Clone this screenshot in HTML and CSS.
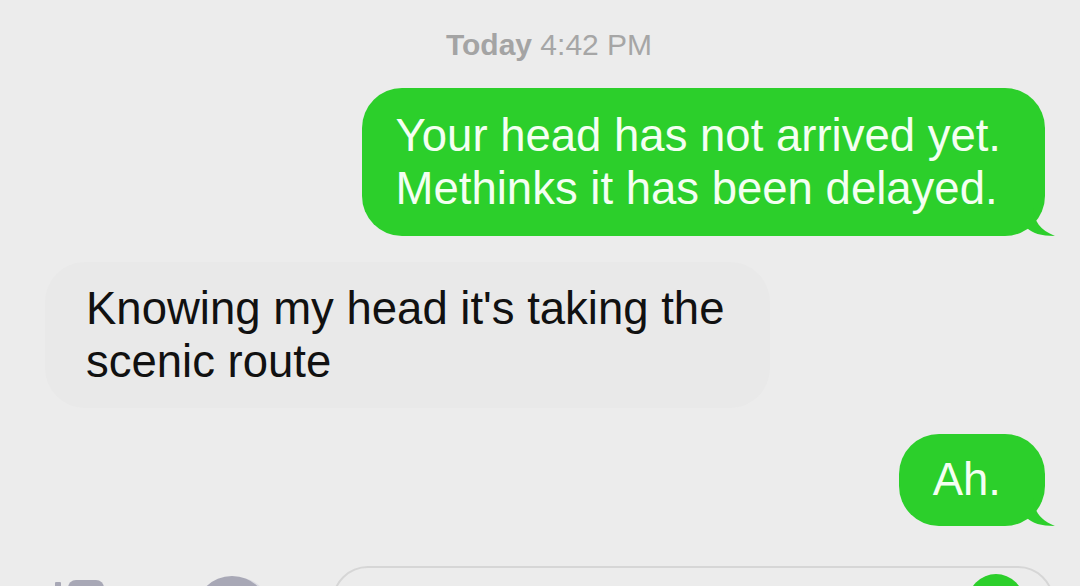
FILE: index.html
```html
<!DOCTYPE html>
<html>
<head>
<meta charset="utf-8">
<link rel="stylesheet" href="styles.css">
</head>
<body>
<div class="screen">
  <div class="timestamp"><span class="day">Today</span> 4:42 PM</div>
  <div class="thread">
    <div class="row row-out">
      <div class="bubble out">Your head has not arrived yet.<br>Methinks it has been delayed.
        <svg class="tail tail-out" width="32" height="28" viewBox="0 0 32 28"><path d="M0 0 L6 0 C7 13 13 22 28 28 C14 28 5 25 0 20 Z" fill="#2ccf2b"/></svg>
      </div>
    </div>
    <div class="row row-in">
      <div class="bubble in">Knowing my head it's taking the<br>scenic route</div>
    </div>
    <div class="row row-out">
      <div class="bubble out short">Ah.
        <svg class="tail tail-out" width="32" height="28" viewBox="0 0 32 28"><path d="M0 0 L6 0 C7 13 13 22 28 28 C14 28 5 25 0 20 Z" fill="#2ccf2b"/></svg>
      </div>
    </div>
  </div>
  <div class="composer">
    <div class="icon camera"></div>
    <div class="icon apps"></div>
    <div class="field"><div class="send"></div></div>
  </div>
</div>
</body>
</html>
```

FILE: styles.css
```css
html, body {
  margin: 0;
  padding: 0;
  background: #ececec;
}
.screen {
  width: 1080px;
  height: 586px;
  overflow: hidden;
  font-family: "Liberation Sans", Arial, sans-serif;
  display: flex;
  flex-direction: column;
}
.timestamp {
  text-align: center;
  color: #a6a6a6;
  font-size: 30px;
  line-height: 30px;
  padding-top: 30px;
  padding-left: 18px;
}
.day { font-weight: bold; color: #a4a4a4; }
.thread {
  display: flex;
  flex-direction: column;
  gap: 26px;
  padding: 28px 35px 0 45px;
}
.row { display: flex; }
.row-out { justify-content: flex-end; }
.row-in { justify-content: flex-start; }
.bubble {
  position: relative;
  font-size: 45.5px;
  line-height: 53px;
  border-radius: 40px;
  padding: 21px 44px 21px 34px;
}
.out {
  background: #2ccf2b;
  color: #f4fff2;
}
.in {
  background: #e9e9e9;
  color: #111;
  padding: 20px 46px 20px 41px;
}
.short {
  padding: 19px 44px 20px 34px;
}
.tail {
  position: absolute;
  right: -14px;
  bottom: 0;
}
.composer {
  margin-top: 42px;
  display: flex;
  align-items: flex-start;
  position: relative;
  height: 40px;
}
.icon { flex: none; }
.camera {
  margin-left: 68px;
  margin-top: 12px;
  width: 36px;
  height: 30px;
  background: #a8a8b6;
  border-radius: 8px;
  position: relative;
}
.camera::before {
  content: "";
  position: absolute;
  left: -13px;
  top: 2px;
  width: 6px;
  height: 6px;
  background: #a8a8b6;
  border-radius: 1px;
}
.apps {
  margin-left: 91px;
  margin-top: 8px;
  width: 74px;
  height: 74px;
  border-radius: 50%;
  background: #a8a8b6;
  box-shadow: 4px 0 0 -1px #dcdce2;
}
.field {
  margin-left: 63px;
  margin-top: -2px;
  width: 718px;
  height: 70px;
  border: 2px solid #d6d6d6;
  border-radius: 36px;
  position: relative;
}
.send {
  position: absolute;
  right: 28px;
  top: 6px;
  width: 56px;
  height: 56px;
  border-radius: 50%;
  background: #2ccf2b;
}
```
